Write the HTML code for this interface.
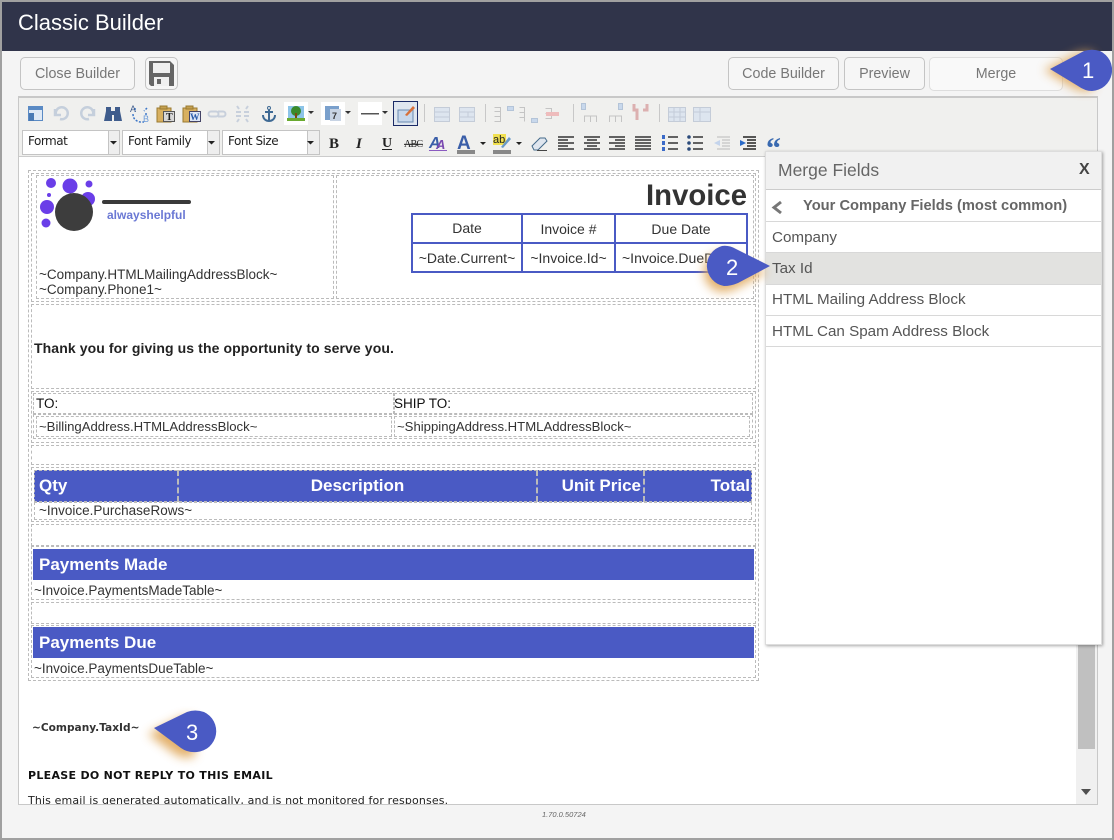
<!DOCTYPE html>
<html><head><meta charset="utf-8"><style>
html,body{margin:0;padding:0;background:#fff}
#p{position:relative;width:1114px;height:840px;overflow:hidden;background:#f4f4f4;font-family:"Liberation Sans",sans-serif}
#p div,#p span.a,#p svg{position:absolute}
.t{white-space:nowrap;font-size:13.5px;color:#333;line-height:16px}
.c{font-size:14px}
.d{border:1px dashed #bbb;box-sizing:border-box}
.btn{border:1px solid #c4c4c4;border-radius:5px;box-sizing:border-box;text-align:center;font-size:14.3px;color:#777;background:#f6f6f6;line-height:32px;top:57px;height:33px}
.bar{background:#4a5ac4;color:#fff;font-weight:bold;font-size:17px;line-height:31px;white-space:nowrap}
.sel{background:#fff;border:1px solid #c4c4c4;box-sizing:border-box;height:25px;top:130px;font-size:12px;line-height:21px;color:#222;padding-left:5px;font-family:"DejaVu Sans",sans-serif;letter-spacing:-.5px}
.row{left:766px;width:335px;height:31px;border-bottom:1px solid #d8d8d8;box-sizing:border-box;font-size:15.2px;line-height:31px;color:#555;padding-left:6px;white-space:nowrap}
.h{font-size:17px;line-height:18px;font-weight:bold;color:#fff;top:477px}
</style></head><body><div id="p">
<div style="left:0;top:0;width:1114px;height:51px;background:#30344a"></div>
<div class="t" style="left:18px;top:11px;font-size:22px;line-height:24px;color:#fff">Classic Builder</div>

<div class="btn" style="left:20px;width:115px">Close Builder</div>
<div class="btn" style="left:145px;width:33px"></div>
<svg style="left:149px;top:61px" width="25" height="25" viewBox="0 0 25 25"><path d="M0 0H21L25 4V25H2L0 23Z" fill="#666"/><rect x="4" y="2" width="17" height="10" fill="#f0f0f0"/><rect x="5" y="16" width="15" height="9" fill="#f0f0f0"/><rect x="8" y="18" width="4" height="5" fill="#666"/></svg>
<div class="btn" style="left:728px;width:111px">Code Builder</div>
<div class="btn" style="left:844px;width:81px">Preview</div>
<div class="btn" style="left:929px;width:134px;height:34px;background:#f9f9f9;border-color:#ddd;line-height:33px">Merge</div>

<!-- editor -->
<div style="left:18px;top:96px;width:1080px;height:709px;background:#fff;border:1px solid #c8c8c8;border-width:2px 1px 1px 1px;box-sizing:border-box"></div>
<div style="left:19px;top:98px;width:1078px;height:59px;background:#f0f0ee;border-bottom:1px solid #ccc;box-sizing:border-box"></div>

<!-- toolbar row 1 -->
<svg style="left:19px;top:98px" width="780" height="32" viewBox="0 0 780 32">
<rect x="9.500" y="8.500" width="14" height="14" fill="#dfe9f5" stroke="#5a8ac4"/><rect x="9" y="8" width="15" height="4" fill="#5a8ac4"/><rect x="10" y="15" width="5" height="8" fill="#4a7ab4"/>
<path d="M37 17a6 6 0 1 1 4 4M36 11v6h6" fill="none" stroke="#c5cfdc" stroke-width="2.500"/>
<path d="M74 17a6 6 0 1 0-4 4M75 11v6h-6" fill="none" stroke="#c5cfdc" stroke-width="2.500"/>
<g fill="#3f5c8c"><rect x="87" y="9" width="5" height="5"/><rect x="96" y="9" width="5" height="5"/><path d="M87 13h6v10h-8zM95 13h6l2 10h-8z"/><rect x="92" y="13" width="4" height="4"/></g>
<path d="M116 10v4M128 10l-3 3M114 16c0 5 3 7 7 8h4M127 15v3" fill="none" stroke="#3f78c8" stroke-dasharray="2 1.500" stroke-width="1.500"/><text x="111" y="14" font-size="9" fill="#3f5c8c" font-family="Liberation Sans">A</text><text x="124" y="24" font-size="9" fill="#6a9ad8" font-family="Liberation Sans">B</text>
<rect x="138" y="10" width="14" height="14" fill="#d8b060" stroke="#9a7a30"/><rect x="141" y="8" width="7" height="3" fill="#c4a050" stroke="#9a7a30"/><rect x="144.500" y="13.500" width="11" height="10" fill="#d8d8d8" stroke="#555"/><text x="147" y="22" font-size="10" font-weight="bold" fill="#222" font-family="Liberation Serif">T</text>
<rect x="164" y="10" width="14" height="14" fill="#d8b060" stroke="#9a7a30"/><rect x="167" y="8" width="7" height="3" fill="#c4a050" stroke="#9a7a30"/><rect x="170.500" y="13.500" width="11" height="10" fill="#dde6f5" stroke="#446"/><text x="171" y="22" font-size="9.500" font-weight="bold" fill="#2a5caa" font-family="Liberation Serif">W</text>
<path d="M192 13.500h5a2.500 2.500 0 0 1 0 5h-5a2.500 2.500 0 0 1 0-5zM199 13.500h5a2.500 2.500 0 0 1 0 5h-5" fill="none" stroke="#c8d0dc" stroke-width="2"/>
<path d="M217 14h5M217 18h5M225 14h5M225 18h5M218 8l2 3M229 8l-2 3M218 24l2-3M229 24l-2-3" fill="none" stroke="#c8d0dc" stroke-width="2"/>
<path d="M250 12v11M246 14h8M244 17c0 4 3 6 6 6s6-2 6-6" fill="none" stroke="#3f6a94" stroke-width="2"/><circle cx="250" cy="10" r="1.500" fill="none" stroke="#3f6a94"/>
<rect x="265" y="4" width="24" height="23" fill="#fff"/><rect x="269" y="8" width="16" height="13" fill="#8cc4e8"/><circle cx="277" cy="13" r="5" fill="#3a8a2a"/><rect x="276" y="15" width="2" height="6" fill="#7a4a10"/><rect x="268" y="20" width="18" height="3" fill="#6aaa30"/>
<path d="M289 13h6l-3 3z" fill="#333"/>
<rect x="302" y="4" width="24" height="23" fill="#fff"/><rect x="306" y="8" width="14" height="14" fill="#7aa0cc"/><rect x="311" y="11" width="11" height="12" fill="#c8d4e4"/><text x="313" y="21" font-size="9" font-weight="bold" fill="#333" font-family="Liberation Sans">7</text>
<path d="M326 13h6l-3 3z" fill="#333"/>
<rect x="339" y="4" width="24" height="23" fill="#fff"/><rect x="342" y="15" width="18" height="1.500" fill="#555"/>
<path d="M363 13h6l-3 3z" fill="#333"/>
<rect x="374.500" y="3.500" width="24" height="24" fill="#dfe6ef" stroke="#1a2a66"/><rect x="379" y="12" width="15" height="12" fill="#c8d8ec" stroke="#6a8ab0"/><path d="M386 17l8-9 2 2-8 8z" fill="#d8703a"/>
<g fill="#c8c8c8"><rect x="405" y="6" width="1" height="18"/><rect x="466" y="6" width="1" height="18"/><rect x="554" y="6" width="1" height="18"/><rect x="640" y="6" width="1" height="18"/></g>
<g fill="#dde5ef" stroke="#c4ccd8"><rect x="415.500" y="9.500" width="15" height="14"/><rect x="440.500" y="9.500" width="15" height="14"/><rect x="649.500" y="9.500" width="17" height="14"/><rect x="674.500" y="9.500" width="17" height="14"/></g>
<path d="M416 14h15M416 19h15M441 14h15M441 19h15M449 14v5M650 14h17M650 19h17M655 10v14M661 10v14M675 14h17M681 10v14" stroke="#c4ccd8" fill="none"/>
<g fill="none" stroke="#c4c4c4"><path d="M475.500 13.500h6v5h-6M475.500 18.500h6v5h-6M475.500 9.500h6v4"/><path d="M500.500 9.500h5v5h-5M500.500 14.500h5v5h-5M500.500 19.500h5v4"/><path d="M526.500 10.500h6v5h-6M526.500 15.500h6v5h-6"/><path d="M565.500 24v-6h6v6M571.500 18h6v6M590.500 24v-6h6v6M596.500 18h6v6"/></g>
<g fill="#c8d8ec" stroke="#b4c4d8"><rect x="488.500" y="8.500" width="6" height="4"/><rect x="512.500" y="20.500" width="6" height="4"/><rect x="562.500" y="5.500" width="4" height="6"/><rect x="599.500" y="5.500" width="4" height="6"/></g>
<rect x="527" y="14" width="13" height="4" fill="#eebcbc"/><path d="M615 6v6h3v10M628 6v6h-4" fill="none" stroke="#dcb0b0" stroke-width="3"/>
</svg>

<!-- toolbar row 2 -->
<div class="sel" style="left:22px;width:98px">Format</div>
<div style="left:108px;top:130px;width:12px;height:25px;background:#eee;border:1px solid #c4c4c4;box-sizing:border-box"></div>
<div class="sel" style="left:122px;width:98px">Font Family</div>
<div style="left:207px;top:130px;width:13px;height:25px;background:#eee;border:1px solid #c4c4c4;box-sizing:border-box"></div>
<div class="sel" style="left:222px;width:98px">Font Size</div>
<div style="left:307px;top:130px;width:13px;height:25px;background:#eee;border:1px solid #c4c4c4;box-sizing:border-box"></div>
<svg style="left:19px;top:130px" width="780" height="27" viewBox="0 0 780 27">
<path d="M91 11h7l-3.500 3.500zM189 11h7l-3.500 3.500zM288 11h7l-3.500 3.500z" fill="#222"/>
<text x="310" y="18" font-family="Liberation Serif" font-weight="bold" font-size="15" fill="#222">B</text>
<text x="337" y="18" font-family="Liberation Serif" font-weight="bold" font-style="italic" font-size="15" fill="#222">I</text>
<text x="363" y="17" font-family="Liberation Serif" font-weight="bold" font-size="14" fill="#222">U</text><rect x="363" y="19" width="10" height="1" fill="#222"/>
<text x="385" y="17" font-family="Liberation Serif" font-size="10" fill="#222" text-decoration="line-through" textLength="19">ABC</text>
<text x="410" y="18" font-family="Liberation Sans" font-weight="bold" font-style="italic" font-size="16" fill="#3a5ea8">A</text><text x="417" y="19" font-family="Liberation Sans" font-weight="bold" font-style="italic" font-size="13" fill="#7a4ab0">A</text><rect x="410" y="20" width="18" height="1" fill="#8a5ac0"/>
<text x="438" y="19" font-family="Liberation Sans" font-weight="bold" font-size="19" fill="#3a5ea8">A</text><rect x="438" y="20" width="18" height="4" fill="#888"/>
<path d="M461 12h6l-3 3z" fill="#222"/>
<rect x="474" y="4" width="13" height="11" fill="#f0e050"/><text x="474" y="13" font-family="Liberation Sans" font-size="11" fill="#222">ab</text><path d="M482 17l8-10 2 2-8 9z" fill="#6a9ac8"/><rect x="474" y="20" width="18" height="4" fill="#888"/>
<path d="M497 12h6l-3 3z" fill="#222"/>
<path d="M513 16l8-8h5l2 3-9 9h-4z" fill="#dfe6ef" stroke="#446a8a"/><path d="M518 20.500h10" stroke="#444"/>
<g fill="none" stroke="#333" stroke-width="1.500"><path d="M539 7h16M539 10h10M539 13h16M539 16h10M539 19h16"/><path d="M565 7h16M568 10h10M565 13h16M568 16h10M565 19h16"/><path d="M590 7h16M596 10h10M590 13h16M596 16h10M590 19h16"/><path d="M616 7h16M616 10h16M616 13h16M616 16h16M616 19h16"/><path d="M649 7h10M649 13h10M649 19h10M674 7h10M674 13h10M674 19h10"/></g>
<g fill="#3a6ac8"><rect x="643" y="5" width="3" height="4"/><rect x="643" y="11" width="3" height="4"/><rect x="643" y="17" width="3" height="4"/></g>
<g fill="#2a4a7a"><circle cx="670" cy="7" r="1.800"/><circle cx="670" cy="13" r="1.800"/><circle cx="670" cy="19" r="1.800"/></g>
<g transform="translate(-6 0)"><path d="M704 7h13M709 10h8M709 13h8M709 16h8M704 19h13" fill="none" stroke="#ccc" stroke-width="1.500"/><path d="M701 13l6-3v6z" fill="#c4d4ec"/>
<path d="M730 7h13M734 10h9M734 13h9M734 16h9M730 19h13" fill="none" stroke="#222" stroke-width="1.500"/><path d="M733 13l-6-3v6z" fill="#2a6ac8"/></g>
<text x="747" y="28" font-family="Liberation Serif" font-weight="bold" font-size="30" fill="#3a6ab0">“</text>
</svg>

<!-- doc -->
<div class="d" style="left:28px;top:170px;width:731px;height:511px"></div>
<div class="d" style="left:31px;top:173px;width:725px;height:129px"></div>
<div class="d" style="left:36px;top:175px;width:298px;height:124px"></div>
<div class="d" style="left:336px;top:175px;width:418px;height:124px"></div>

<svg style="left:37px;top:176px" width="160" height="60" viewBox="0 0 160 60">
<g fill="#6a3ee8"><circle cx="14" cy="7" r="5"/><circle cx="33" cy="10" r="7.500"/><circle cx="52" cy="8" r="3.500"/><circle cx="12" cy="19" r="2"/><circle cx="51" cy="23" r="7"/><circle cx="10" cy="31" r="7"/><circle cx="9" cy="47" r="4.500"/></g>
<circle cx="37" cy="36" r="19" fill="#3d3d3d"/>
<rect x="65" y="24" width="89" height="4" rx="2" fill="#3a3a3a"/>
</svg>
<div class="t" style="left:107px;top:207px;font-size:12px;font-weight:bold;color:#6a78d4">alwayshelpful</div>
<div class="t" style="left:39px;top:267px">~Company.HTMLMailingAddressBlock~</div>
<div class="t" style="left:39px;top:282px">~Company.Phone1~</div>

<div class="t" style="left:500px;width:247px;top:181px;text-align:right;font-size:29.300px;line-height:30px;font-weight:bold;color:#333">Invoice</div>
<div style="left:411px;top:213px;width:337px;height:60px;border:2px solid #4a5ac4;box-sizing:border-box"></div>
<div style="left:411px;top:242px;width:337px;height:2px;background:#4a5ac4"></div>
<div style="left:521px;top:213px;width:2px;height:60px;background:#4a5ac4"></div>
<div style="left:614px;top:213px;width:2px;height:60px;background:#4a5ac4"></div>
<div class="t c" style="left:413px;width:108px;top:220px;text-align:center">Date</div>
<div class="t c" style="left:523px;width:91px;top:221px;text-align:center">Invoice #</div>
<div class="t c" style="left:616px;width:130px;top:221px;text-align:center">Due Date</div>
<div class="t c" style="left:413px;width:108px;top:250px;text-align:center">~Date.Current~</div>
<div class="t c" style="left:523px;width:91px;top:250px;text-align:center">~Invoice.Id~</div>
<div class="t c" style="left:622px;top:250px">~Invoice.DueDate~</div>

<div class="d" style="left:31px;top:304px;width:725px;height:85px"></div>
<div class="t c" style="left:34px;top:340px;font-weight:bold;color:#222;letter-spacing:.1px">Thank you for giving us the opportunity to serve you.</div>

<div class="d" style="left:31px;top:391px;width:725px;height:52px"></div>
<div class="d" style="left:33px;top:393px;width:720px;height:21px"></div>
<div class="d" style="left:393px;top:393px;width:1px;height:21px"></div>
<div class="d" style="left:33px;top:414px;width:720px;height:25px"></div>
<div class="d" style="left:36px;top:416px;width:356px;height:21px"></div>
<div class="d" style="left:394px;top:416px;width:356px;height:21px"></div>
<div class="t" style="left:36px;top:396px;color:#111">TO:</div>
<div class="t" style="left:394px;top:396px;color:#111">SHIP TO:</div>
<div class="t" style="left:39px;top:419px;font-size:13.15px">~BillingAddress.HTMLAddressBlock~</div>
<div class="t" style="left:397px;top:419px;font-size:13.15px">~ShippingAddress.HTMLAddressBlock~</div>

<div class="d" style="left:31px;top:445px;width:725px;height:20px"></div>
<div class="d" style="left:31px;top:467px;width:725px;height:55px"></div>
<div class="bar" style="left:34px;top:470px;width:718px;height:32px;border:1px dashed #bbb;box-sizing:border-box"></div>
<div class="d" style="left:177px;top:470px;width:1px;height:32px;border-width:0 0 0 2px"></div>
<div class="d" style="left:536px;top:470px;width:1px;height:32px;border-width:0 0 0 2px"></div>
<div class="d" style="left:643px;top:470px;width:1px;height:32px;border-width:0 0 0 2px"></div>
<div class="t h" style="left:39px">Qty</div>
<div class="t h" style="left:179px;width:357px;text-align:center">Description</div>
<div class="t h" style="left:540px;width:101px;text-align:right">Unit Price</div>
<div class="t h" style="left:646px;width:104px;text-align:right">Total</div>
<div class="d" style="left:34px;top:502px;width:718px;height:18px"></div>
<div class="t" style="left:39px;top:503px">~Invoice.PurchaseRows~</div>

<div class="d" style="left:31px;top:524px;width:725px;height:22px"></div>
<div class="d" style="left:31px;top:546px;width:725px;height:54px"></div>
<div class="bar" style="left:33px;top:549px;width:721px;padding-left:6px;box-sizing:border-box">Payments Made</div>
<div class="t" style="left:34px;top:583px">~Invoice.PaymentsMadeTable~</div>
<div class="d" style="left:31px;top:602px;width:725px;height:22px"></div>
<div class="d" style="left:31px;top:625px;width:725px;height:53px"></div>
<div class="bar" style="left:33px;top:627px;width:721px;padding-left:6px;box-sizing:border-box">Payments Due</div>
<div class="t" style="left:34px;top:661px">~Invoice.PaymentsDueTable~</div>

<div class="t" style="left:32px;top:720px;font-size:10.600px;font-weight:bold;color:#333;font-family:'DejaVu Sans',sans-serif">~Company.TaxId~</div>
<div class="t" style="left:28px;top:768px;font-size:11px;font-weight:bold;color:#111;font-family:'DejaVu Sans',sans-serif;letter-spacing:.3px">PLEASE DO NOT REPLY TO THIS EMAIL</div>
<div style="left:19px;top:790px;width:1057px;height:14px;overflow:hidden"><div class="t" style="left:9px;top:3px;font-size:11px;color:#222;font-family:'DejaVu Sans',sans-serif;letter-spacing:.135px">This email is generated automatically, and is not monitored for responses.</div></div>

<!-- scrollbar -->
<div style="left:1076px;top:640px;width:21px;height:164px;background:#f0f0f0"></div>
<div style="left:1078px;top:640px;width:17px;height:109px;background:#c0c0c0"></div>
<svg style="left:1081px;top:789px" width="10" height="7"><path d="M0 0H10L5 6Z" fill="#505050"/></svg>

<!-- panel -->
<div style="left:765px;top:151px;width:337px;height:494px;background:#fff;border:1px solid #ddd;box-sizing:border-box;box-shadow:1px 1px 3px rgba(0,0,0,.35)"></div>
<div style="left:766px;top:152px;width:335px;height:38px;background:#f1f1f1;border-bottom:1px solid #ccc;box-sizing:border-box"></div>
<div class="t" style="left:778px;top:160px;font-size:17.500px;line-height:20px;color:#666">Merge Fields</div>
<div class="t" style="left:1079px;top:160px;font-size:16px;line-height:20px;font-weight:bold;color:#444">X</div>
<div class="row" style="top:190px;height:32px;padding:0"></div>
<svg style="left:771px;top:200px" width="12" height="15"><path d="M10 2L3 7.500L10 13" fill="none" stroke="#777" stroke-width="3"/></svg>
<div class="t" style="left:803px;top:198px;font-size:14.700px;font-weight:bold;color:#666">Your Company Fields (most common)</div>
<div class="row" style="top:222px">Company</div>
<div class="row" style="top:253px;height:32px;background:#e2e2e0">Tax Id</div>
<div class="row" style="top:285px;line-height:29px">HTML Mailing Address Block</div>
<div class="row" style="top:316px">HTML Can Spam Address Block</div>

<!-- callouts -->
<svg style="left:0;top:0" width="1114" height="840" viewBox="0 0 1114 840">
<defs><filter id="g" x="-50%" y="-50%" width="200%" height="200%"><feGaussianBlur stdDeviation="5"/></filter></defs>
<path d="M1050 69L1084 52Q1092 50 1100 52V88Q1090 92 1080 87Z" fill="#e0a85c" opacity=".9" filter="url(#g)" transform="translate(-6 1)"/>
<path d="M1050 69L1084 51Q1092 48.500 1100 51A21 21 0 0 1 1092 91Q1085 91 1078 86Z" fill="#4a5ac4"/>
<path d="M770 266L736 249Q729 245 722 246A20.500 20.500 0 0 0 724 286Q731 286 738 283Z" fill="#e0a85c" opacity=".9" filter="url(#g)" transform="translate(-3 6)"/>
<path d="M770 266L736 249Q729 245 722 246A20.500 20.500 0 0 0 724 286Q731 286 738 283Z" fill="#4a5ac4"/>
<path d="M154 728L186 712Q194 709 201 712V750Q190 754 181 748Z" fill="#e0a85c" opacity=".9" filter="url(#g)" transform="translate(-6 6)"/>
<path d="M154 728L187 712Q195 709 204 712A21 21 0 0 1 197 752Q188 753 181 748Z" fill="#4a5ac4"/>
<text x="1082" y="78" fill="#fff" font-size="22" font-family="Liberation Sans">1</text>
<text x="726" y="275" fill="#fff" font-size="22" font-family="Liberation Sans">2</text>
<text x="186" y="740" fill="#fff" font-size="22" font-family="Liberation Sans">3</text>
</svg>

<div class="t" style="left:542px;top:810px;font-size:7.500px;line-height:10px;font-style:italic;color:#666">1.70.0.50724</div>

<!-- outer frame -->
<div style="left:0;top:0;width:1114px;height:840px;border:2px solid #a0a0a0;box-sizing:border-box"></div>
</div></body></html>
